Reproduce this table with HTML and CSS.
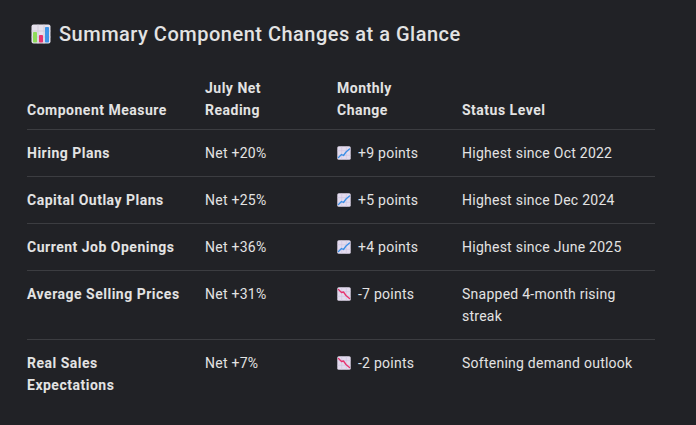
FILE: index.html
```html
<!DOCTYPE html>
<html lang="en">
<head>
<meta charset="utf-8">
<title>Summary Component Changes at a Glance</title>
<link rel="stylesheet" href="styles.css">
</head>
<body>
<h2 class="title">
  <svg class="emoji-title" viewBox="0 0 20 20" aria-hidden="true">
    <rect x="0.5" y="0.5" width="19" height="19" rx="2" fill="#e6e1ec"/>
    <path d="M0.5 7H19.5M0.5 13H19.5M7 0.5V19.5M13 0.5V19.5" stroke="#cfc8d8" stroke-width="0.8"/>
    <rect x="2" y="8" width="4" height="10.5" rx="0.8" fill="#8fdc5a"/>
    <rect x="8" y="11" width="4" height="7.5" rx="0.8" fill="#e8336f"/>
    <rect x="14" y="3" width="4" height="15.5" rx="0.8" fill="#3d95e8"/>
  </svg>
  <span>Summary Component Changes at a Glance</span>
</h2>
<table class="summary">
  <colgroup>
    <col class="c1"><col class="c2"><col class="c3"><col class="c4">
  </colgroup>
  <thead>
    <tr>
      <th>Component Measure</th>
      <th>July Net Reading</th>
      <th>Monthly Change</th>
      <th>Status Level</th>
    </tr>
  </thead>
  <tbody>
    <tr>
      <td class="name">Hiring Plans</td>
      <td>Net +20%</td>
      <td><svg class="emoji" viewBox="0 0 14 14"><rect x="0.3" y="0.3" width="13.4" height="13.4" rx="1.5" fill="#e3dbee"/><path d="M0.3 4.7H13.7M0.3 9.3H13.7M4.7 0.3V13.7M9.3 0.3V13.7" stroke="#cbbfdc" stroke-width="0.5"/><path d="M1.5 11.5L4.5 8.5L6.5 9.5L9 6L12.5 3" fill="none" stroke="#3b8fe6" stroke-width="1.3" stroke-linejoin="round" stroke-linecap="round"/></svg>+9 points</td>
      <td>Highest since Oct 2022</td>
    </tr>
    <tr>
      <td class="name">Capital Outlay Plans</td>
      <td>Net +25%</td>
      <td><svg class="emoji" viewBox="0 0 14 14"><rect x="0.3" y="0.3" width="13.4" height="13.4" rx="1.5" fill="#e3dbee"/><path d="M0.3 4.7H13.7M0.3 9.3H13.7M4.7 0.3V13.7M9.3 0.3V13.7" stroke="#cbbfdc" stroke-width="0.5"/><path d="M1.5 11.5L4.5 8.5L6.5 9.5L9 6L12.5 3" fill="none" stroke="#3b8fe6" stroke-width="1.3" stroke-linejoin="round" stroke-linecap="round"/></svg>+5 points</td>
      <td>Highest since Dec 2024</td>
    </tr>
    <tr>
      <td class="name">Current Job Openings</td>
      <td>Net +36%</td>
      <td><svg class="emoji" viewBox="0 0 14 14"><rect x="0.3" y="0.3" width="13.4" height="13.4" rx="1.5" fill="#e3dbee"/><path d="M0.3 4.7H13.7M0.3 9.3H13.7M4.7 0.3V13.7M9.3 0.3V13.7" stroke="#cbbfdc" stroke-width="0.5"/><path d="M1.5 11.5L4.5 8.5L6.5 9.5L9 6L12.5 3" fill="none" stroke="#3b8fe6" stroke-width="1.3" stroke-linejoin="round" stroke-linecap="round"/></svg>+4 points</td>
      <td>Highest since June 2025</td>
    </tr>
    <tr>
      <td class="name">Average Selling Prices</td>
      <td>Net +31%</td>
      <td><svg class="emoji" viewBox="0 0 14 14"><rect x="0.3" y="0.3" width="13.4" height="13.4" rx="1.5" fill="#e3dbee"/><path d="M0.3 4.7H13.7M0.3 9.3H13.7M4.7 0.3V13.7M9.3 0.3V13.7" stroke="#cbbfdc" stroke-width="0.5"/><path d="M1.5 2.5L4.5 5.5L6.5 5L9 8.5L12.5 11.5" fill="none" stroke="#e8336f" stroke-width="1.3" stroke-linejoin="round" stroke-linecap="round"/></svg>-7 points</td>
      <td>Snapped 4-month rising streak</td>
    </tr>
    <tr class="last">
      <td class="name">Real Sales Expectations</td>
      <td>Net +7%</td>
      <td><svg class="emoji" viewBox="0 0 14 14"><rect x="0.3" y="0.3" width="13.4" height="13.4" rx="1.5" fill="#e3dbee"/><path d="M0.3 4.7H13.7M0.3 9.3H13.7M4.7 0.3V13.7M9.3 0.3V13.7" stroke="#cbbfdc" stroke-width="0.5"/><path d="M1.5 2.5L4.5 5.5L6.5 5L9 8.5L12.5 11.5" fill="none" stroke="#e8336f" stroke-width="1.3" stroke-linejoin="round" stroke-linecap="round"/></svg>-2 points</td>
      <td>Softening demand outlook</td>
    </tr>
  </tbody>
</table>
</body>
</html>
```
FILE: styles.css
```css
html, body {
  margin: 0;
  background: #212226;
}
body {
  padding: 20px 27px;
  color: #e3e3e3;
  font-family: Roboto, "Noto Sans", "Liberation Sans", sans-serif;
  font-size: 14px;
  line-height: 22px;
  letter-spacing: 0.25px;
}
.title {
  display: flex;
  align-items: center;
  gap: 8px;
  margin: 0 0 17px 4px;
  font-size: 20px;
  line-height: 28px;
  font-weight: 500;
  letter-spacing: 0.5px;
  color: #e3e3e3;
}
.emoji-title {
  width: 20px;
  height: 20px;
  flex: none;
}
.summary {
  border-collapse: collapse;
  table-layout: fixed;
  width: 628px;
}
.c1 { width: 178px; }
.c2 { width: 132px; }
.c3 { width: 125px; }
.c4 { width: 193px; }
.summary th,
.summary td {
  padding: 12px 20px 12px 0;
  text-align: left;
  border-bottom: 1px solid #3c3d41;
}
.summary th {
  font-weight: 700;
  letter-spacing: 0.5px;
  vertical-align: bottom;
  padding-bottom: 8px;
}
.summary td {
  vertical-align: top;
}
.summary td.name {
  font-weight: 700;
  letter-spacing: 0.5px;
}
.summary tr.last td {
  border-bottom: none;
}
.emoji {
  width: 14px;
  height: 14px;
  margin-right: 7px;
  vertical-align: -2px;
}
```
